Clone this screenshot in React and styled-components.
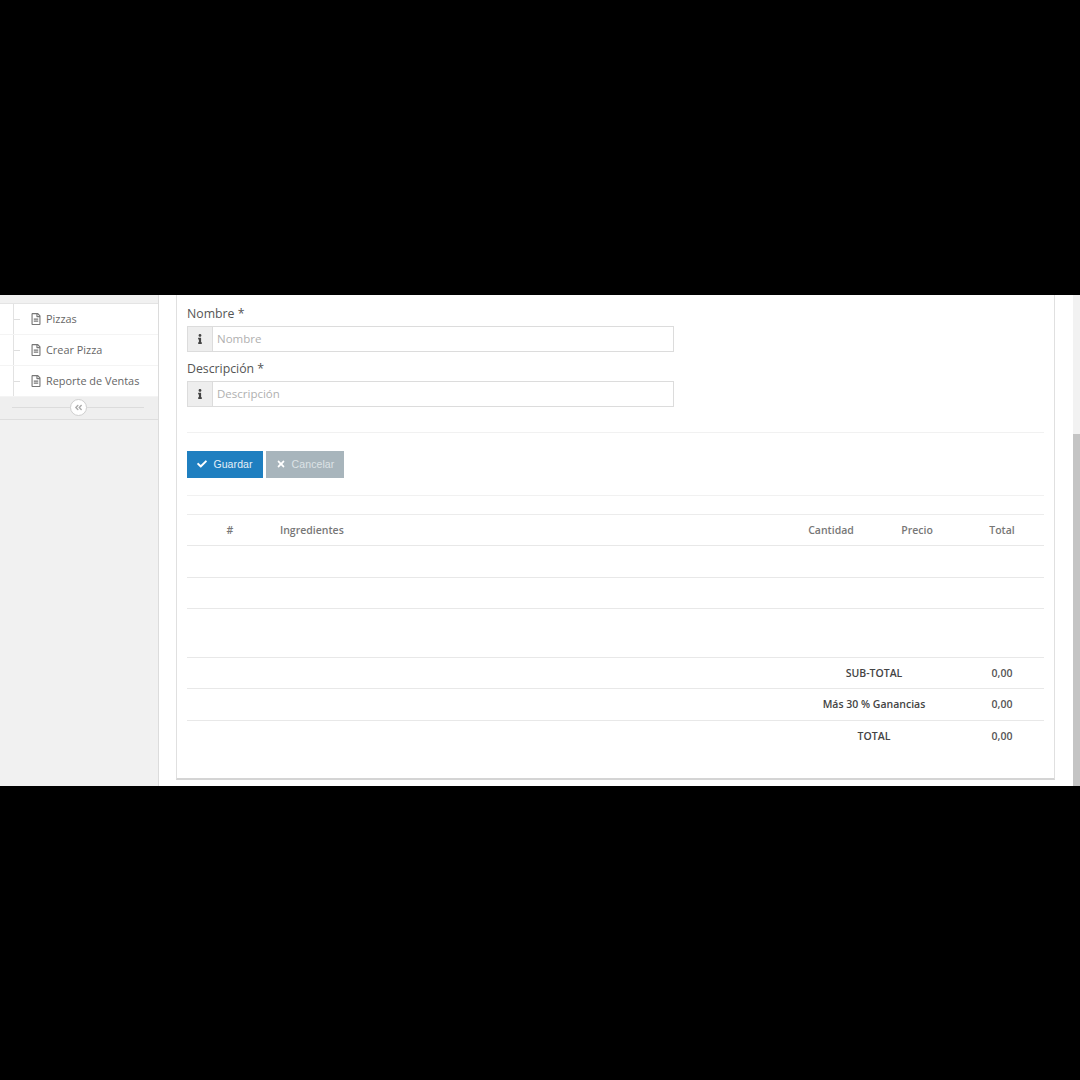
import React from "react";
import styled, { createGlobalStyle } from "styled-components";
import { FaCheck, FaTimes, FaInfo, FaRegFileAlt, FaAngleDoubleLeft } from "react-icons/fa";

const Global = createGlobalStyle`
  html, body { margin: 0; padding: 0; background: #000; }
  body { font-family: "Open Sans", "Noto Sans", sans-serif; color: #555; }
`;

const Page = styled.div`
  width: 1080px;
  height: 1080px;
  background: #000;
  display: flex;
  flex-direction: column;
`;
const Band = styled.div`
  height: ${p => p.$h}px;
  flex: none;
`;
const Viewport = styled.div`
  height: 491px;
  background: #fff;
  display: flex;
  overflow: hidden;
  flex: none;
`;
const Sidebar = styled.aside`
  width: 158px;
  flex: none;
  background: #f1f1f1;
  border-right: 1px solid #dcdcdc;
  padding-top: 8px;
  box-sizing: content-box;
`;
const Menu = styled.ul`
  list-style: none;
  margin: 0;
  padding: 0;
  background: #fff;
  border-top: 1px solid #e4e4e4;
  position: relative;
  &::before {
    content: "";
    position: absolute;
    left: 13px;
    top: 0;
    bottom: 0;
    width: 1px;
    background: #e2e2e2;
  }
`;
const MenuItem = styled.li`
  height: 31px;
  display: flex;
  align-items: center;
  padding: 0 0 1px 30px;
  gap: 4px;
  font-size: 10.9px;
  color: #666;
  border-bottom: 1px solid #f4f4f4;
  box-sizing: border-box;
  position: relative;
  white-space: nowrap;
  &::before {
    content: "";
    position: absolute;
    left: 14px;
    top: 15px;
    width: 6px;
    height: 1px;
    background: #dedede;
  }
  svg { font-size: 12px; color: #777; flex: none; }
`;
const Collapse = styled.div`
  height: 23px;
  background: #efefef;
  border-bottom: 1px solid #dedede;
  display: flex;
  align-items: center;
  padding: 0 0 2px 70px;
  box-sizing: border-box;
  position: relative;
  &::before {
    content: "";
    position: absolute;
    left: 12px;
    right: 14px;
    top: 10px;
    height: 1px;
    background: #dcdcdc;
  }
`;
const CollapseBtn = styled.span`
  width: 15px;
  height: 15px;
  border-radius: 50%;
  border: 1px solid #cfcfcf;
  background: #fff;
  color: #aaa;
  font-size: 9px;
  display: flex;
  align-items: center;
  justify-content: center;
  position: relative;
`;
const Main = styled.main`
  flex: 1;
  min-width: 0;
  padding: 0 18px 6px 17px;
  display: flex;
`;
const Card = styled.section`
  flex: 1;
  min-width: 0;
  background: #fff;
  border: 1px solid #e0e0e0;
  border-top: none;
  border-bottom: 2px solid #d4d4d4;
  padding: 8px 10px 0;
  box-sizing: border-box;
`;
const Field = styled.div`
  width: 487px;
  margin-bottom: 6px;
`;
const Label = styled.label`
  display: block;
  font-size: 12.3px;
  line-height: 20px;
  color: #555;
  padding-top: 1px;
  margin-bottom: 2px;
`;
const InputGroup = styled.div`
  display: flex;
  height: 26px;
  border: 1px solid #dcdcdc;
  box-sizing: border-box;
`;
const Addon = styled.span`
  width: 24px;
  flex: none;
  background: #eee;
  border-right: 1px solid #dcdcdc;
  color: #444;
  font-size: 10px;
  display: flex;
  align-items: center;
  justify-content: center;
`;
const Input = styled.input`
  flex: 1;
  min-width: 0;
  border: none;
  outline: none;
  padding: 0 5px 2px 4px;
  font: 11.5px "Open Sans", sans-serif;
  background: #fff;
  &::placeholder { color: #b0b0b0; opacity: 1; }
`;
const Divider = styled.hr`
  border: none;
  border-top: 1px solid #f1f1f1;
  margin: ${p => p.$m};
`;
const Actions = styled.div`
  display: flex;
  gap: 3px;
`;
const Button = styled.button`
  height: 27px;
  width: ${p => p.$w}px;
  border: none;
  background: ${p => p.$bg};
  color: ${p => p.$fg};
  font: 10.5px "Liberation Sans", Arial, sans-serif;
  letter-spacing: 0.1px;
  display: flex;
  align-items: center;
  justify-content: center;
  gap: 6px;
  padding: 0 0 2px;
  svg { font-size: 10px; color: #fff; }
`;
const Table = styled.div`
  border-top: 1px solid #ececec;
  margin-top: 18px;
`;
const Row = styled.div`
  display: grid;
  grid-template-columns: 86px 515px 86px 86px 1fr;
  height: ${p => p.$h}px;
  align-items: center;
  border-bottom: ${p => p.$last ? "none" : "1px solid #e8e8e8"};
  font-size: 10.5px;
  box-sizing: border-box;
  padding-bottom: 1px;
`;
const Head = styled.span`
  text-align: ${p => p.$left ? "left" : "center"};
  padding-left: ${p => p.$left ? "7px" : "0"};
  font-weight: 600;
  color: #777;
`;
const FootLabel = styled.span`
  grid-column: 3 / span 2;
  text-align: center;
  font-weight: 600;
  color: #444;
`;
const FootValue = styled.span`
  text-align: center;
  font-weight: 600;
  color: #555;
`;
const ScrollTrack = styled.div`
  width: 7px;
  flex: none;
  background: #f2f2f2;
  display: flex;
  flex-direction: column;
  justify-content: flex-end;
`;
const ScrollThumb = styled.div`
  height: 352px;
  background: #c4c4c4;
`;

const items = ["Pizzas", "Crear Pizza", "Reporte de Ventas"];

export default function App() {
  return (
    <Page>
      <Global />
      <Band $h={295} />
      <Viewport>
        <Sidebar>
          <Menu>
            {items.map(t => (
              <MenuItem key={t}><FaRegFileAlt />{t}</MenuItem>
            ))}
          </Menu>
          <Collapse><CollapseBtn><FaAngleDoubleLeft /></CollapseBtn></Collapse>
        </Sidebar>
        <Main>
          <Card>
            <Field>
              <Label>Nombre *</Label>
              <InputGroup>
                <Addon><FaInfo /></Addon>
                <Input placeholder="Nombre" />
              </InputGroup>
            </Field>
            <Field>
              <Label>Descripción *</Label>
              <InputGroup>
                <Addon><FaInfo /></Addon>
                <Input placeholder="Descripción" />
              </InputGroup>
            </Field>
            <Divider $m="25px 0 18px" />
            <Actions>
              <Button $w={76} $bg="#1f7fc0" $fg="#e4f0f8"><FaCheck />Guardar</Button>
              <Button $w={78} $bg="#a8b5bc" $fg="#dde3e6"><FaTimes />Cancelar</Button>
            </Actions>
            <Divider $m="17px 0 0" />
            <Table>
              <Row $h={31}>
                <Head>#</Head>
                <Head $left>Ingredientes</Head>
                <Head>Cantidad</Head>
                <Head>Precio</Head>
                <Head>Total</Head>
              </Row>
              <Row $h={32} />
              <Row $h={31} />
              <Row $h={49} />
              <Row $h={31}><span /><span /><FootLabel>SUB-TOTAL</FootLabel><FootValue>0,00</FootValue></Row>
              <Row $h={32}><span /><span /><FootLabel>Más 30 % Ganancias</FootLabel><FootValue>0,00</FootValue></Row>
              <Row $h={31} $last><span /><span /><FootLabel>TOTAL</FootLabel><FootValue>0,00</FootValue></Row>
            </Table>
          </Card>
        </Main>
        <ScrollTrack><ScrollThumb /></ScrollTrack>
      </Viewport>
    </Page>
  );
}
